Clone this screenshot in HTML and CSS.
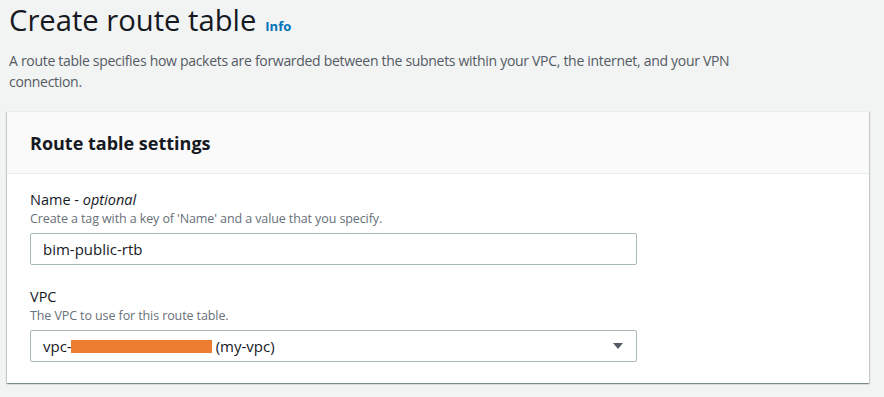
FILE: index.html
```html
<!DOCTYPE html>
<html lang="en">
<head>
<meta charset="utf-8">
<title>Create route table</title>
<link rel="stylesheet" href="styles.css">
</head>
<body>
<div class="page">
  <div class="page-head">
    <h1 class="title">Create route table</h1>
    <a class="info" href="#">Info</a>
  </div>
  <p class="lead">A route table specifies how packets are forwarded between the subnets within your VPC, the internet, and your VPN connection.</p>
  <section class="card">
    <header class="card-head">
      <h2 class="card-title">Route table settings</h2>
    </header>
    <div class="card-body">
      <div class="field">
        <div class="label">Name - <i>optional</i></div>
        <div class="hint">Create a tag with a key of 'Name' and a value that you specify.</div>
        <div class="input">bim-public-rtb</div>
      </div>
      <div class="field">
        <div class="label">VPC</div>
        <div class="hint">The VPC to use for this route table.</div>
        <div class="input select">
          <span class="val">vpc-<span class="redact"></span> (my-vpc)</span>
          <svg class="caret" width="12" height="8" viewBox="0 0 12 8"><path d="M1 1 H11 L6 7 Z" fill="#545b64"/></svg>
        </div>
      </div>
    </div>
  </section>
</div>
</body>
</html>
```

FILE: styles.css
```css
* { box-sizing: border-box; }
html, body { margin: 0; padding: 0; }
body {
  background: #f2f3f3;
  font-family: "Open Sans", "Noto Sans", sans-serif;
  color: #16191f;
  width: 884px;
  height: 397px;
  overflow: hidden;
}
.page { padding: 0 15px 0 7px; }
.page-head {
  display: flex;
  align-items: baseline;
  gap: 9px;
  padding-left: 2px;
  height: 40px;
}
.title {
  margin: 0;
  font-weight: 400;
  font-size: 29.2px;
  line-height: 40px;
  color: #16191f;
}
.info {
  font-size: 13px;
  font-weight: 700;
  color: #0073bb;
  text-decoration: none;
}
.lead {
  margin: 10px 0 0 2px;
  font-size: 14px;
  letter-spacing: -0.3px;
  line-height: 21px;
  color: #545b64;
  max-width: 760px;
}
.card {
  margin-top: 19px;
  background: #fff;
  box-shadow: 0 1px 1px 0 rgba(0,28,36,.3), 1px 1px 1px 0 rgba(0,28,36,.15), -1px 1px 1px 0 rgba(0,28,36,.15);
  border-top: 1px solid #eaeded;
}
.card-head {
  background: #fafafa;
  border-bottom: 1px solid #eaeded;
  height: 62px;
  display: flex;
  align-items: center;
  padding: 0 23px;
}
.card-title {
  margin: 0;
  font-size: 18px;
  font-weight: 700;
  line-height: 22px;
}
.card-body { padding: 16px 23px 21px; display: flex; flex-direction: column; gap: 22px; }
.label { font-size: 14.5px; line-height: 20px; }
.label i { font-style: italic; }
.hint { font-size: 12.5px; line-height: 17px; color: #687078; margin-bottom: 6px; letter-spacing: -0.1px; }
.input {
  width: 607px;
  height: 32px;
  border: 1px solid #aab7b8;
  border-radius: 2px;
  padding: 0 12px;
  display: flex;
  align-items: center;
  font-size: 15px;
  color: #16191f;
}
.select { justify-content: space-between; }
.val { display: flex; align-items: center; }
.redact {
  display: inline-block;
  width: 141px;
  height: 13px;
  background: #ed7d31;
  margin: 0 4px 0 -1px;
}
```
